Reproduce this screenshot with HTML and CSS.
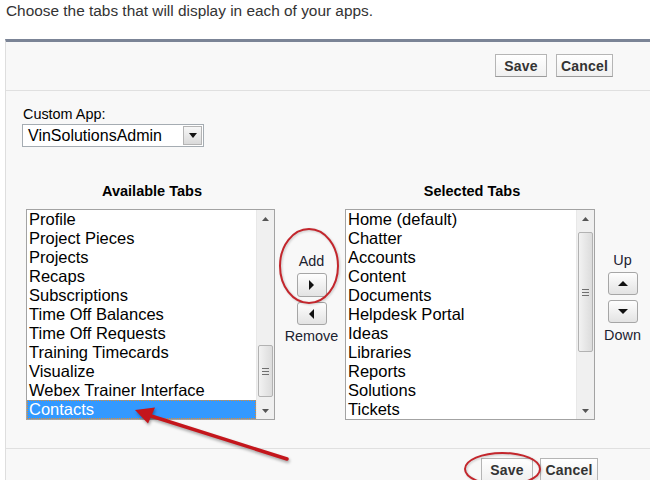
FILE: index.html
```html
<!DOCTYPE html>
<html>
<head>
<meta charset="utf-8">
<link rel="stylesheet" href="styles.css">
</head>
<body>
<p class="intro">Choose the tabs that will display in each of your apps.</p>
<div class="panel">
  <div class="btnbar btnbar-top">
    <button class="btn btn-save">Save</button>
    <button class="btn btn-cancel">Cancel</button>
  </div>
  <div class="panel-body">
    <div class="field">
      <label class="field-label">Custom App:</label>
      <div class="select">
        <span class="select-value">VinSolutionsAdmin</span>
        <span class="select-btn"><svg width="8" height="5" viewBox="0 0 8 5"><path d="M0 0H8L4 5Z" fill="#111"/></svg></span>
      </div>
    </div>
    <div class="picker">
      <h3 class="col-title title-avail">Available Tabs</h3>
      <h3 class="col-title title-sel">Selected Tabs</h3>
      <div class="listbox">
        <ul class="items">
          <li>Profile</li>
          <li>Project Pieces</li>
          <li>Projects</li>
          <li>Recaps</li>
          <li>Subscriptions</li>
          <li>Time Off Balances</li>
          <li>Time Off Requests</li>
          <li>Training Timecards</li>
          <li>Visualize</li>
          <li>Webex Trainer Interface</li>
          <li class="selected">Contacts</li>
        </ul>
        <div class="sb">
          <div class="sb-arrow"><svg width="7" height="4" viewBox="0 0 7 4"><path d="M0 4H7L3.5 0Z" fill="#555"/></svg></div>
          <div class="sb-track"><div class="sb-thumb thumb-avail"><span class="grip"></span><span class="grip"></span><span class="grip"></span></div></div>
          <div class="sb-arrow"><svg width="7" height="4" viewBox="0 0 7 4"><path d="M0 0H7L3.5 4Z" fill="#555"/></svg></div>
        </div>
      </div>
      <div class="mover mover-add">
        <span class="mover-label">Add</span>
        <button class="arrow-btn arrow-btn-tall"><svg width="5" height="10" viewBox="0 0 5 10"><path d="M0 0L5 5L0 10Z" fill="#111"/></svg></button>
        <button class="arrow-btn arrow-btn-second"><svg width="5" height="10" viewBox="0 0 5 10"><path d="M5 0L0 5L5 10Z" fill="#111"/></svg></button>
        <span class="mover-label mover-label-bottom">Remove</span>
      </div>
      <div class="listbox">
        <ul class="items">
          <li>Home (default)</li>
          <li>Chatter</li>
          <li>Accounts</li>
          <li>Content</li>
          <li>Documents</li>
          <li>Helpdesk Portal</li>
          <li>Ideas</li>
          <li>Libraries</li>
          <li>Reports</li>
          <li>Solutions</li>
          <li>Tickets</li>
        </ul>
        <div class="sb">
          <div class="sb-arrow"><svg width="7" height="4" viewBox="0 0 7 4"><path d="M0 4H7L3.5 0Z" fill="#555"/></svg></div>
          <div class="sb-track"><div class="sb-thumb thumb-sel"><span class="grip"></span><span class="grip"></span><span class="grip"></span></div></div>
          <div class="sb-arrow"><svg width="7" height="4" viewBox="0 0 7 4"><path d="M0 0H7L3.5 4Z" fill="#555"/></svg></div>
        </div>
      </div>
      <div class="mover mover-order">
        <span class="mover-label">Up</span>
        <button class="arrow-btn"><svg width="10" height="5" viewBox="0 0 10 5"><path d="M0 5H10L5 0Z" fill="#111"/></svg></button>
        <button class="arrow-btn arrow-btn-second"><svg width="10" height="5" viewBox="0 0 10 5"><path d="M0 0H10L5 5Z" fill="#111"/></svg></button>
        <span class="mover-label mover-label-bottom">Down</span>
      </div>
    </div>
  </div>
  <div class="btnbar btnbar-bottom">
    <button class="btn btn-save">Save</button>
    <button class="btn btn-cancel-b">Cancel</button>
  </div>
</div>
<svg class="annot" width="650" height="480" viewBox="0 0 650 480">
  <g class="marks" fill="none" stroke="#c3262c" stroke-width="2">
    <ellipse cx="309" cy="266" rx="29" ry="37"/>
    <ellipse cx="502.5" cy="469" rx="37.5" ry="16"/>
  </g>
  <g class="arrow">
    <line x1="287" y1="459" x2="148" y2="415" stroke="#c4161c" stroke-width="3.5" stroke-linecap="round"/>
    <path d="M135 410L155 407.5L148 423.5Z" fill="#c4161c"/>
  </g>
</svg>
</body>
</html>
```
FILE: styles.css
```css
* { box-sizing: border-box; }
html, body { margin: 0; padding: 0; background: #fff; }
body {
  width: 650px;
  height: 480px;
  overflow: hidden;
  position: relative;
  font-family: "Liberation Sans", Arial, sans-serif;
  color: #000;
}
.intro {
  margin: 0;
  height: 39px;
  padding: 2px 0 0 6px;
  font-size: 15.4px;
  line-height: 18px;
  color: #333;
}
.panel {
  margin-left: 5px;
  height: 441px;
  border-top: 3px solid #7b8496;
  border-left: 1px solid #dedede;
  background: #f8f8f8;
}
.btnbar { display: flex; justify-content: flex-end; align-items: flex-start; }
.btnbar-top {
  height: 49px;
  padding: 12px 37px 0 0;
  gap: 9px;
  border-bottom: 1px solid #e0e0e0;
}
.btnbar-bottom {
  border-top: 1px solid #e0e0e0;
  padding: 9px 52px 0 0;
  gap: 7px;
}
.btn {
  height: 23px;
  padding: 0;
  font-family: "Liberation Sans", Arial, sans-serif;
  font-weight: bold;
  font-size: 14px;
  letter-spacing: 0.2px;
  color: #333;
  border: 1px solid #b5b5b5;
  border-bottom-color: #9a9a9a;
  background: linear-gradient(#ffffff, #f0f0f0);
}
.btn-save { width: 52px; }
.btn-cancel { width: 57px; }
.btn-cancel-b { width: 58px; }
.panel-body { padding: 15px 0 28px 0; }
.field { padding-left: 16px; }
.field-label {
  display: block;
  padding-left: 1px;
  font-size: 14.4px;
  line-height: 16px;
  color: #000;
}
.select {
  margin-top: 2px;
  width: 182px;
  height: 23px;
  display: flex;
  align-items: center;
  border: 1px solid #a5acb2;
  background: #fff;
}
.select-value {
  flex: 1;
  padding-left: 5px;
  font-size: 16px;
  line-height: 20px;
}
.select-btn {
  width: 19px;
  height: 19px;
  margin-right: 1px;
  display: flex;
  align-items: center;
  justify-content: center;
  border: 1px solid #b4b4b4;
  background: linear-gradient(#f7f7f7, #dadada);
}
.picker {
  margin-top: 36px;
  padding-left: 20px;
  display: grid;
  grid-template-columns: 249px 70px 250px 55px;
  grid-template-rows: 17px 211px;
  row-gap: 9px;
}
.col-title {
  margin: 0;
  font-size: 14.5px;
  line-height: 17px;
  font-weight: bold;
  text-align: center;
}
.title-avail { grid-column: 1; padding-left: 3px; }
.title-sel { grid-column: 3; padding-left: 4px; }
.listbox {
  grid-row: 2;
  display: flex;
  border: 1px solid #a3a3a3;
  background: #fff;
}
.items {
  flex: 1;
  margin: 0;
  padding: 0;
  list-style: none;
  font-size: 16.5px;
  line-height: 19px;
  overflow: hidden;
}
.items li { padding-left: 2px; white-space: nowrap; height: 19px; }
.items li.selected {
  background: #3399ff;
  color: #fff;
  outline: 1px dotted #e38d2f;
  outline-offset: -1px;
}
.sb {
  width: 18px;
  display: flex;
  flex-direction: column;
  background: #f0f0f0;
  border-left: 1px solid #e8e8e8;
}
.sb-arrow {
  height: 17px;
  display: flex;
  align-items: center;
  justify-content: center;
}
.sb-track { flex: 1; padding: 0 1px; }
.sb-thumb {
  display: flex;
  flex-direction: column;
  justify-content: center;
  align-items: center;
  gap: 2px;
  border: 1px solid #b2b2b2;
  border-radius: 2px;
  background: linear-gradient(90deg, #f2f2f2, #dcdcdc);
}
.thumb-avail { margin-top: 118px; height: 52px; }
.thumb-sel { margin-top: 5px; height: 120px; }
.grip { width: 7px; height: 1px; background: #6f6f6f; }
.mover {
  grid-row: 2;
  display: flex;
  flex-direction: column;
  align-items: center;
  padding-top: 44px;
}
.mover-add { padding-left: 3px; }
.mover-order { padding-top: 43px; }
.mover-label {
  font-size: 14.4px;
  line-height: 17px;
  color: #1b2230;
}
.mover-label-bottom { margin-top: 3px; }
.mover-order .mover-label-bottom { margin-top: 4px; }
.arrow-btn {
  margin-top: 3px;
  width: 30px;
  height: 23px;
  padding: 0;
  display: flex;
  align-items: center;
  justify-content: center;
  border: 1px solid #a6a6a6;
  border-radius: 3px;
  background: linear-gradient(#fefefe, #e3e3e3);
}
.arrow-btn-tall { height: 24px; }
.arrow-btn-second { margin-top: 5px; }
.annot {
  position: absolute;
  top: 0;
  left: 0;
  pointer-events: none;
}
.marks { filter: drop-shadow(1px 1px 1px rgba(0,0,0,0.2)); }
.arrow { filter: drop-shadow(1px 2px 1.5px rgba(0,0,0,0.35)); }
```
